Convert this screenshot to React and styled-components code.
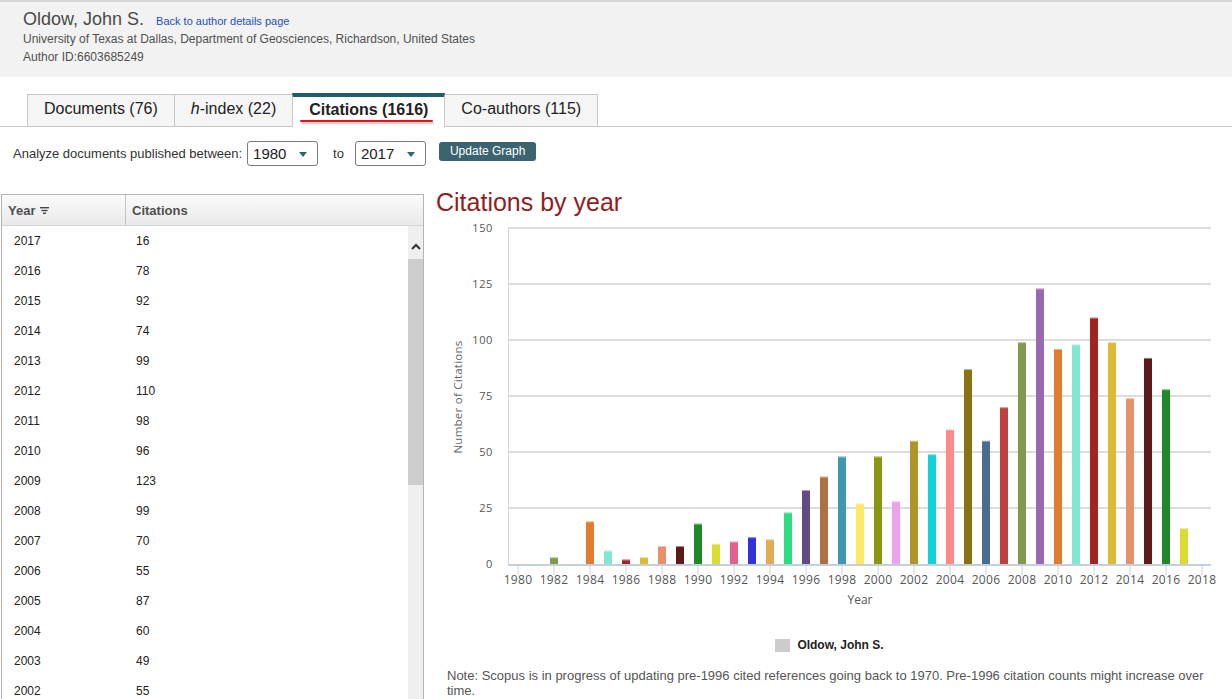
import React from "react";
import styled, { createGlobalStyle } from "styled-components";

const GlobalStyle = createGlobalStyle`
  html, body { margin: 0; padding: 0; background: #fff; }
  body { font-family: "Liberation Sans", Arial, sans-serif; overflow: hidden; width: 1232px; height: 699px; }
  * { box-sizing: border-box; }
`;

const DATA = [
  [1980, 0], [1981, 0], [1982, 3], [1983, 0], [1984, 19], [1985, 6], [1986, 2], [1987, 3],
  [1988, 8], [1989, 8], [1990, 18], [1991, 9], [1992, 10], [1993, 12], [1994, 11], [1995, 23],
  [1996, 33], [1997, 39], [1998, 48], [1999, 27], [2000, 48], [2001, 28], [2002, 55], [2003, 49],
  [2004, 60], [2005, 87], [2006, 55], [2007, 70], [2008, 99], [2009, 123], [2010, 96], [2011, 98],
  [2012, 110], [2013, 99], [2014, 74], [2015, 92], [2016, 78], [2017, 16],
];

const PALETTE = [
  "#7f9a50", "#9a68b0", "#e07b30", "#80e8d2", "#a02424", "#dcba32", "#e8906e", "#5c1a1a",
  "#21882a", "#dcdc30", "#e26090", "#3232dc", "#e2ac52", "#2edc82", "#624a82", "#aa7242",
  "#3e98b0", "#ffe864", "#8a960c", "#eea2ec", "#b09428", "#12d2d8", "#ff8888", "#887212",
  "#4a6c90", "#c04040",
];

const Header = styled.header`
  background: #f2f2f2;
  border-top: 2px solid #d6d6d6;
  height: 77px;
  padding: 7px 23px 0;
  color: #505050;
`;

const NameRow = styled.div`
  display: flex;
  align-items: baseline;
`;

const Name = styled.span`
  font-size: 18px;
  color: #4a4a4a;
`;

const BackLink = styled.a`
  font-size: 11px;
  color: #1f4fb8;
  margin-left: 12px;
  text-decoration: none;
`;

const InfoLine = styled.div`
  font-size: 12px;
  line-height: 18px;
`;

const TabsBar = styled.nav`
  display: flex;
  align-items: flex-end;
  margin-top: 16px;
  padding-left: 27px;
  border-bottom: 1px solid #c8c8c8;
  height: 34px;
`;

const Tab = styled.div`
  position: relative;
  height: ${(p) => (p.$active ? 34 : 32)}px;
  padding: 0 16px ${(p) => (p.$active ? 5 : 3)}px;
  display: flex;
  align-items: center;
  font-size: 16px;
  color: #222;
  font-weight: ${(p) => (p.$active ? "bold" : "normal")};
  background: ${(p) => (p.$active ? "#fff" : "#f5f5f5")};
  border: 1px solid #c8c8c8;
  border-top: ${(p) => (p.$active ? "4px solid #1d5f6c" : "1px solid #c8c8c8")};
  border-bottom: none;
  margin-right: -1px;
  margin-bottom: ${(p) => (p.$active ? "-1px" : "0")};
  z-index: ${(p) => (p.$active ? 2 : 1)};
  i { font-style: italic; }
  ${(p) =>
    p.$active &&
    `
    &::after {
      content: "";
      position: absolute;
      left: 7px;
      right: 11px;
      bottom: 5px;
      height: 2px;
      background: #e8101a;
      border-radius: 1px;
      box-shadow: 1px 2px 2px rgba(0,0,0,0.25);
    }
  `}
`;

const Controls = styled.div`
  display: flex;
  padding: 14px 13px 0;
  height: 61px;
  align-items: flex-start;
  font-size: 13px;
  color: #333;
`;

const ControlLabel = styled.span`
  line-height: 25px;
  margin-right: ${(p) => p.$mr || 0}px;
`;

const Select = styled.div`
  width: 71px;
  height: 25px;
  border: 1px solid #7a7a7a;
  border-radius: 3px;
  background: #fff;
  display: flex;
  align-items: center;
  justify-content: space-between;
  padding: 0 10px 0 5px;
  font-size: 15px;
  color: #222;
  margin-right: ${(p) => p.$mr || 0}px;
`;

const Caret = styled.span`
  width: 0;
  height: 0;
  border-left: 4px solid transparent;
  border-right: 4px solid transparent;
  border-top: 5px solid #2d6472;
  margin-top: 2px;
`;

const UpdateButton = styled.button`
  height: 19px;
  margin-top: 1px;
  padding: 0 11px;
  background: #3b6470;
  color: #fff;
  border: none;
  border-radius: 3px;
  font-family: "Liberation Sans", Arial, sans-serif;
  font-size: 12px;
  line-height: 19px;
`;

const Main = styled.div`
  display: flex;
  align-items: flex-start;
`;

const TablePanel = styled.div`
  margin: 6px 0 0 1px;
  width: 423px;
  height: 520px;
  border: 1px solid #b4b4b4;
  border-bottom: none;
  display: flex;
  flex-direction: column;
`;

const TableHead = styled.div`
  display: flex;
  height: 30px;
  background: linear-gradient(#fbfbfb, #e9e9e9);
  flex-shrink: 0;
`;

const HeadCell = styled.div`
  width: ${(p) => (p.$w ? `${p.$w}px` : "auto")};
  flex: ${(p) => (p.$w ? "none" : "1")};
  display: flex;
  align-items: center;
  padding-left: ${(p) => p.$pl}px;
  font-size: 13px;
  font-weight: bold;
  color: #505050;
  border-right: ${(p) => (p.$w ? "1px solid #c4c4c4" : "none")};
  gap: 5px;
`;

const TableBody = styled.div`
  display: flex;
  flex: 1;
  overflow: hidden;
  border-top: 1px solid #d4d4d4;
`;

const Rows = styled.div`
  flex: 1;
  overflow: hidden;
`;

const Row = styled.div`
  display: flex;
  height: 30px;
  align-items: center;
  font-size: 12px;
  color: #222;
`;

const Cell = styled.div`
  width: ${(p) => (p.$w ? `${p.$w}px` : "auto")};
  padding-left: ${(p) => p.$pl}px;
`;

const Scrollbar = styled.div`
  width: 15px;
  background: #efefef;
  display: flex;
  flex-direction: column;
  align-items: center;
  flex-shrink: 0;
`;

const ScrollArrow = styled.div`
  height: 33px;
  display: flex;
  align-items: center;
  justify-content: center;
  padding-top: 8px;
`;

const ScrollThumb = styled.div`
  width: 15px;
  height: 226px;
  background: #cdcdcd;
`;

const ChartPanel = styled.section`
  margin-left: 12px;
  flex: 1;
  display: flex;
  flex-direction: column;
`;

const ChartTitle = styled.h2`
  margin: 0;
  font-weight: normal;
  font-size: 25px;
  line-height: 29px;
  color: #8f1e1e;
`;

const Legend = styled.div`
  display: flex;
  align-items: center;
  justify-content: center;
  gap: 7px;
  margin-top: 21px;
  padding-right: 9px;
  height: 14px;
  font-size: 12px;
  font-weight: bold;
  color: #222;
`;

const LegendSwatch = styled.span`
  width: 15px;
  height: 13px;
  background: #cccccc;
`;

const Note = styled.p`
  margin: 16px 0 0 11px;
  width: 772px;
  font-size: 13px;
  line-height: 15px;
  color: #555;
`;

const FilterIcon = () => (
  <svg width="9" height="7" viewBox="0 0 9 7">
    <rect x="0" y="0" width="9" height="1.4" fill="#444" />
    <rect x="1.5" y="2.8" width="6" height="1.4" fill="#444" />
    <rect x="3" y="5.6" width="3" height="1.4" fill="#444" />
  </svg>
);

const ChevronUp = () => (
  <svg width="10" height="7" viewBox="0 0 10 7">
    <path d="M1 6 L5 2 L9 6" fill="none" stroke="#333" strokeWidth="2" />
  </svg>
);

const CitationsChart = () => {
  const W = 796;
  const H = 400;
  const left = 72;
  const right = 775;
  const top = 11;
  const bottom = 347;
  const scale = (bottom - top) / 150;
  const x0 = 82;
  const step = 18;
  const ticks = [0, 25, 50, 75, 100, 125, 150];
  const years = [];
  for (let y = 1980; y <= 2018; y += 2) years.push(y);
  return (
    <svg width={W} height={H} style={{ display: "block" }}>
      {ticks.map((t) => {
        const y = bottom - t * scale;
        return (
          <g key={t}>
            {t > 0 && <line x1={left} x2={right} y1={y} y2={y} stroke="#dcdcdc" strokeWidth="2" />}
            <text x={57} y={y + 4} textAnchor="end" fontSize="11" fill="#555" fontFamily="'Open Sans', sans-serif" letterSpacing="0.6">
              {t}
            </text>
          </g>
        );
      })}
      <line x1={left + 0.5} x2={left + 0.5} y1={top} y2={bottom} stroke="#cdd6e2" strokeWidth="1" />
      {DATA.map(([yr, v]) => {
        if (!v) return null;
        const cx = x0 + (yr - 1980) * step;
        const h = v * scale;
        const color = PALETTE[(yr - 1982 + 26 * 4) % 26];
        return (
          <g key={yr}>
            <rect x={cx - 4} y={bottom - h} width={8} height={h} fill={color} />
            <rect x={cx - 4} y={bottom - h} width={8} height={1} fill="#fff" opacity="0.45" />
          </g>
        );
      })}
      <line x1={left} x2={right} y1={bottom + 1} y2={bottom + 1} stroke="#c4cedb" strokeWidth="2" />
      {years.map((yr) => {
        const cx = x0 + (yr - 1980) * step;
        return (
          <g key={yr}>
            <line x1={cx} x2={cx} y1={bottom + 2} y2={bottom + 11} stroke="#c4d2e2" strokeWidth="1" />
            <text x={cx} y={bottom + 20} textAnchor="middle" fontSize="12" fill="#555" fontFamily="'Open Sans', sans-serif" letterSpacing="0.3">
              {yr}
            </text>
          </g>
        );
      })}
      <text x={424} y={bottom + 40} textAnchor="middle" fontSize="12" fill="#555" fontFamily="'Open Sans', sans-serif">
        Year
      </text>
      <text
        transform="translate(26 180) rotate(-90)"
        textAnchor="middle"
        fontSize="11.5"
        fill="#666"
        fontFamily="'Open Sans', sans-serif"
        letterSpacing="0.25"
      >
        Number of Citations
      </text>
    </svg>
  );
};

export default function App() {
  const rows = [...DATA].reverse();
  return (
    <>
      <GlobalStyle />
      <Header>
        <NameRow>
          <Name>Oldow, John S.</Name>
          <BackLink href="#">Back to author details page</BackLink>
        </NameRow>
        <InfoLine>University of Texas at Dallas, Department of Geosciences, Richardson, United States</InfoLine>
        <InfoLine>Author ID:6603685249</InfoLine>
      </Header>
      <TabsBar>
        <Tab>Documents (76)</Tab>
        <Tab><span><i>h</i>-index (22)</span></Tab>
        <Tab $active>Citations (1616)</Tab>
        <Tab>Co-authors (115)</Tab>
      </TabsBar>
      <Controls>
        <ControlLabel $mr={5}>Analyze documents published between:</ControlLabel>
        <Select $mr={15}>
          1980
          <Caret />
        </Select>
        <ControlLabel $mr={11}>to</ControlLabel>
        <Select $mr={13}>
          2017
          <Caret />
        </Select>
        <UpdateButton>Update Graph</UpdateButton>
      </Controls>
      <Main>
        <TablePanel>
          <TableHead>
            <HeadCell $w={124} $pl={6}>
              Year <FilterIcon />
            </HeadCell>
            <HeadCell $pl={6}>Citations</HeadCell>
          </TableHead>
          <TableBody>
            <Rows>
              {rows.map(([yr, v]) => (
                <Row key={yr}>
                  <Cell $w={124} $pl={12}>{yr}</Cell>
                  <Cell $pl={10}>{v}</Cell>
                </Row>
              ))}
            </Rows>
            <Scrollbar>
              <ScrollArrow>
                <ChevronUp />
              </ScrollArrow>
              <ScrollThumb />
            </Scrollbar>
          </TableBody>
        </TablePanel>
        <ChartPanel>
          <ChartTitle>Citations by year</ChartTitle>
          <CitationsChart />
          <Legend>
            <LegendSwatch />
            Oldow, John S.
          </Legend>
          <Note>
            Note: Scopus is in progress of updating pre-1996 cited references going back to 1970. Pre-1996 citation counts might increase over time.
          </Note>
        </ChartPanel>
      </Main>
    </>
  );
}
